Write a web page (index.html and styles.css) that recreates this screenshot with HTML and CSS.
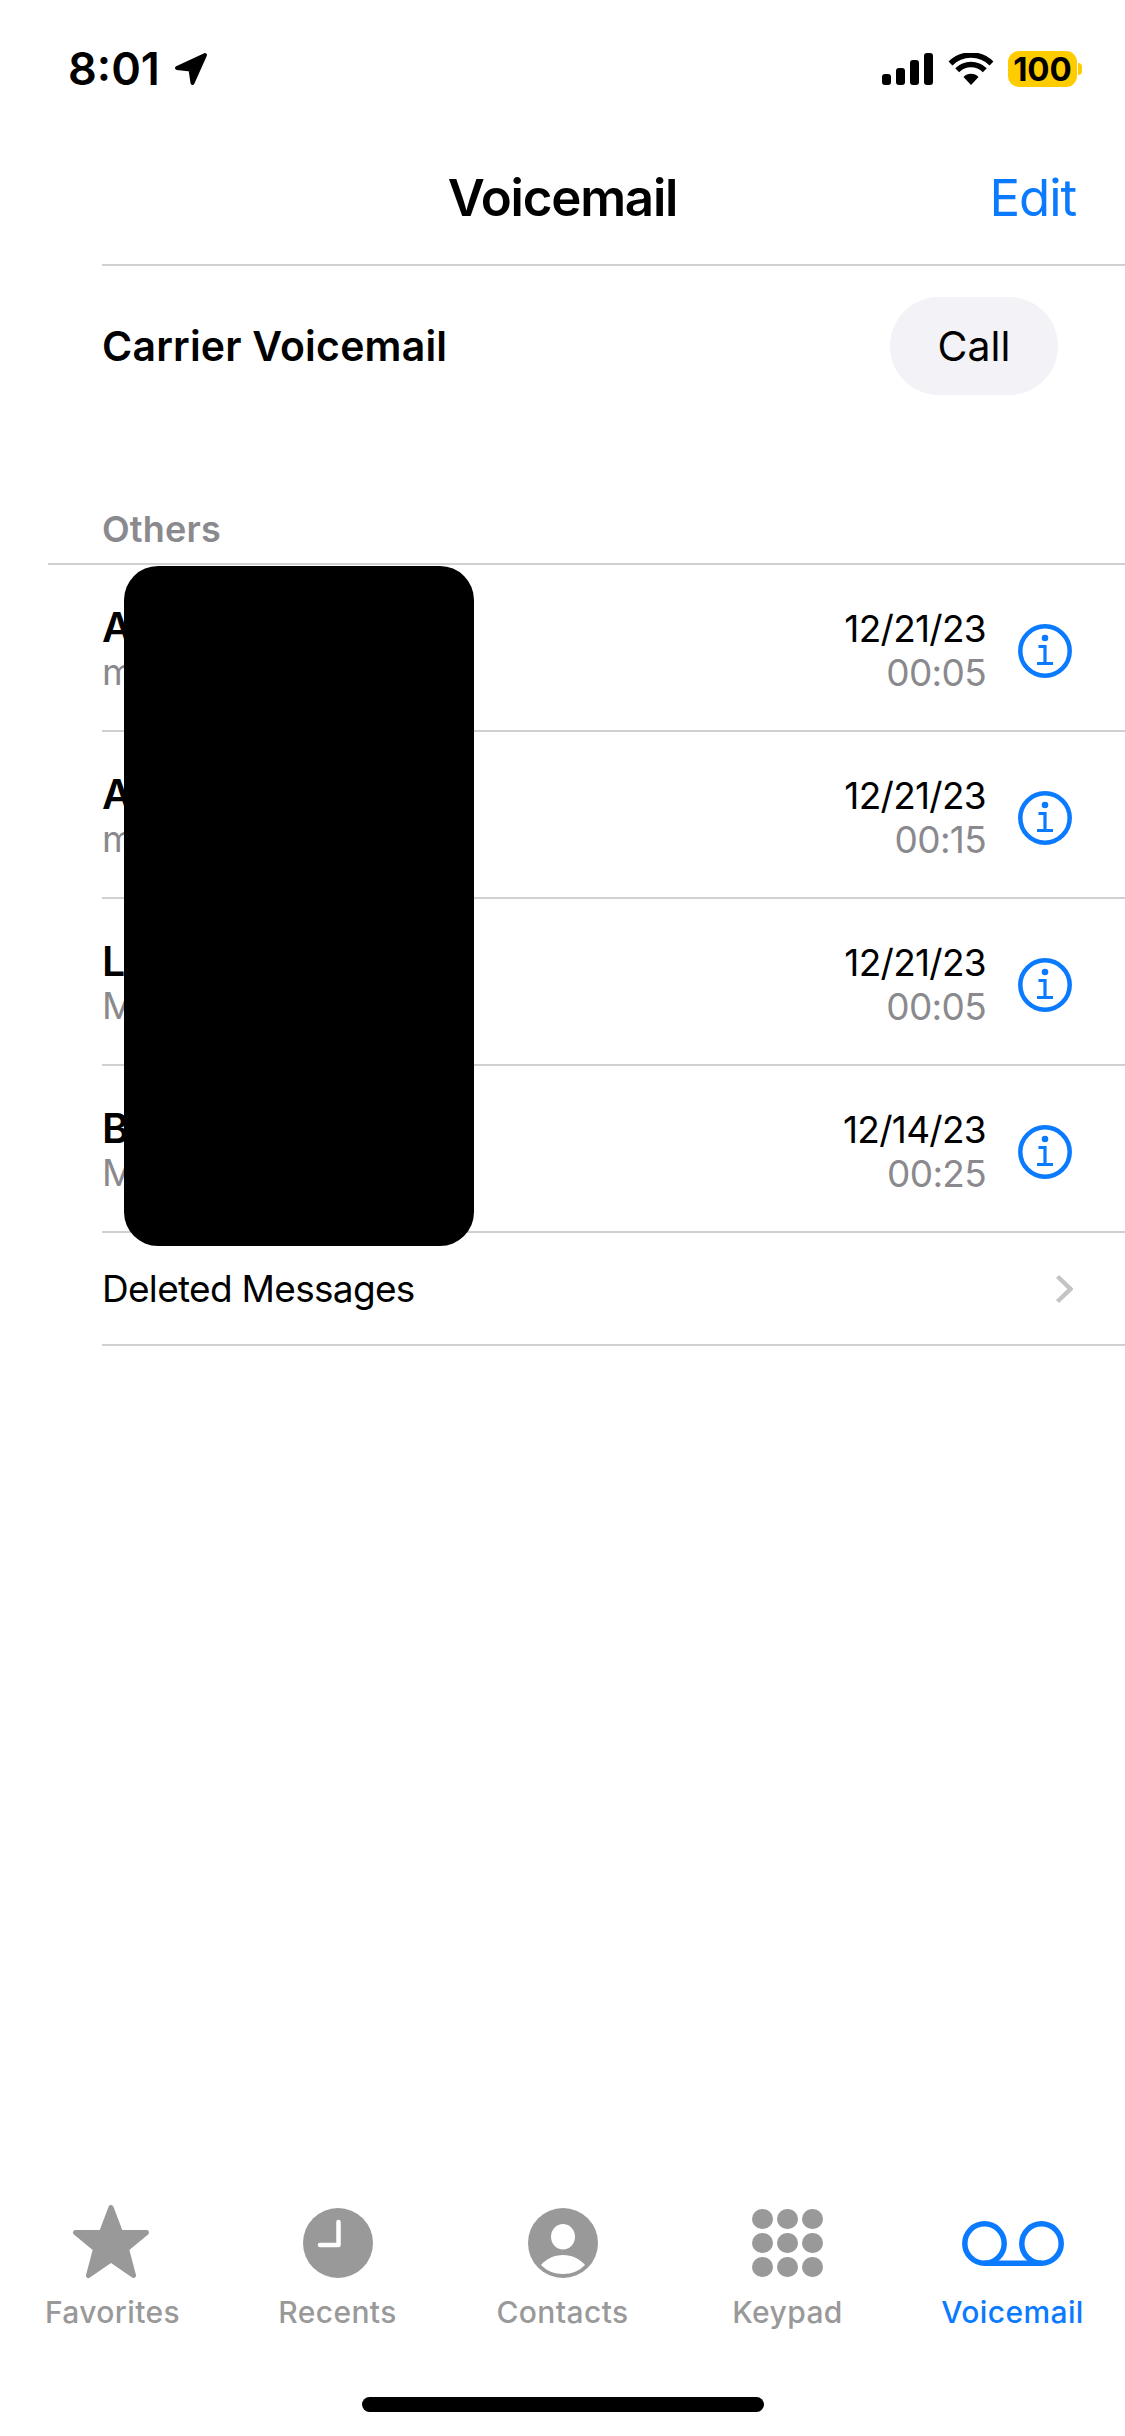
FILE: index.html
```html
<!DOCTYPE html>
<html lang="en">
<head>
    <meta charset="UTF-8">
    <meta name="viewport" content="width=device-width, initial-scale=1.0">
    <title>Voicemail</title>
    <link rel="stylesheet" href="styles.css">
</head>
<body>
<div class="screen">

    <!-- Status bar -->
    <div class="status-bar">
        <div class="status-left">
            <span class="status-time">8:01</span>
            <svg class="icon-location" viewBox="0 0 34 34"><path d="M31 3 L3 16 L16.5 17.5 L18.5 31 Z"/></svg>
        </div>
        <div class="status-right">
            <div class="signal">
                <span class="signal-bar bar-1"></span>
                <span class="signal-bar bar-2"></span>
                <span class="signal-bar bar-3"></span>
                <span class="signal-bar bar-4"></span>
            </div>
            <svg class="icon-wifi" viewBox="0 0 46 33">
                <path class="wifi-arc" d="M2.5 10.5 A29 29 0 0 1 43.5 10.5"/>
                <path class="wifi-arc" d="M9.2 17.2 A19.5 19.5 0 0 1 36.8 17.2"/>
                <path class="wifi-dot" d="M23 32 L15.5 24 A10.5 10.5 0 0 1 30.5 24 Z"/>
            </svg>
            <div class="battery">
                <span class="battery-body">100</span>
                <span class="battery-nub"></span>
            </div>
        </div>
    </div>

    <!-- Navigation -->
    <div class="nav">
        <span></span>
        <span class="nav-title">Voicemail</span>
        <span class="nav-edit">Edit</span>
    </div>

    <!-- Carrier voicemail -->
    <div class="carrier">
        <span class="carrier-name">Carrier Voicemail</span>
        <span class="call-button">Call</span>
    </div>

    <div class="section-title">Others</div>

    <!-- Messages -->
    <div class="list">
        <div class="row">
            <div class="row-main">
                <div class="row-name">A</div>
                <div class="row-sub">m</div>
            </div>
            <div class="row-meta">
                <div class="row-date">12/21/23</div>
                <div class="row-length">00:05</div>
            </div>
            <svg class="icon-info" viewBox="0 0 54 54"><use href="#info"/></svg>
        </div>
        <div class="row">
            <div class="row-main">
                <div class="row-name">A</div>
                <div class="row-sub">m</div>
            </div>
            <div class="row-meta">
                <div class="row-date">12/21/23</div>
                <div class="row-length">00:15</div>
            </div>
            <svg class="icon-info" viewBox="0 0 54 54"><use href="#info"/></svg>
        </div>
        <div class="row">
            <div class="row-main">
                <div class="row-name">L</div>
                <div class="row-sub">M</div>
            </div>
            <div class="row-meta">
                <div class="row-date">12/21/23</div>
                <div class="row-length">00:05</div>
            </div>
            <svg class="icon-info" viewBox="0 0 54 54"><use href="#info"/></svg>
        </div>
        <div class="row">
            <div class="row-main">
                <div class="row-name">B</div>
                <div class="row-sub">M</div>
            </div>
            <div class="row-meta">
                <div class="row-date">12/14/23</div>
                <div class="row-length">00:25</div>
            </div>
            <svg class="icon-info" viewBox="0 0 54 54"><use href="#info"/></svg>
        </div>
        <div class="deleted">
            <span>Deleted Messages</span>
            <svg class="icon-chevron" viewBox="0 0 18 30"><path d="M2.5 2.5 L15.5 15 L2.5 27.5"/></svg>
        </div>
        <div class="redaction"></div>
    </div>

    <!-- Tab bar -->
    <div class="tabbar">
        <div class="tabs">
            <div class="tab">
                <div class="tab-icon">
                    <svg class="icon-star" viewBox="0 0 78 76"><path d="M39 2.500 L48.500 27.500 L74.500 27.500 L54.500 44 L61.500 70.500 L39 55 L16.500 70.500 L23.500 44 L3.500 27.500 L29.500 27.500 Z"/></svg>
                </div>
                <span class="tab-label">Favorites</span>
            </div>
            <div class="tab">
                <div class="tab-icon">
                    <svg class="icon-clock" viewBox="0 0 70 70">
                        <circle class="tab-fill" cx="35" cy="35" r="35"/>
                        <path class="clock-hands" d="M35.500 14 V37 H17"/>
                    </svg>
                </div>
                <span class="tab-label">Recents</span>
            </div>
            <div class="tab">
                <div class="tab-icon">
                    <svg class="icon-contact" viewBox="0 0 70 70">
                        <circle class="tab-fill" cx="35" cy="35" r="35"/>
                        <ellipse class="contact-cut" cx="35" cy="28.800" rx="12" ry="12.800"/>
                        <path class="contact-cut" d="M13 57 C18 51 26 47 35 47 C44 47 52 51 57 57 C51 63 44 66 35 66 C26 66 19 63 13 57 Z"/>
                    </svg>
                </div>
                <span class="tab-label">Contacts</span>
            </div>
            <div class="tab">
                <div class="tab-icon">
                    <div class="keypad">
                        <span></span><span></span><span></span>
                        <span></span><span></span><span></span>
                        <span></span><span></span><span></span>
                    </div>
                </div>
                <span class="tab-label">Keypad</span>
            </div>
            <div class="tab tab-active">
                <div class="tab-icon">
                    <svg class="icon-voicemail" viewBox="0 0 102 45">
                        <circle cx="22.500" cy="22.500" r="19.700"/>
                        <circle cx="79.500" cy="22.500" r="19.700"/>
                        <path d="M22.500 42.200 H79.500"/>
                    </svg>
                </div>
                <span class="tab-label">Voicemail</span>
            </div>
        </div>
        <div class="home-bar"></div>
    </div>

    <svg class="defs" width="0" height="0">
        <symbol id="info" viewBox="0 0 54 54">
            <circle cx="27" cy="27" r="24.700" fill="none" stroke="#0a7aff" stroke-width="4.500"/>
            <circle cx="27" cy="14" r="3.300" fill="#0a7aff"/>
            <path d="M20.500 22.500 H27 V39.500 M19 39.500 H35" fill="none" stroke="#0a7aff" stroke-width="3.200"/>
        </symbol>
    </svg>
</div>
</body>
</html>
```

FILE: styles.css
```css
/* Основа экрана */
* {
    box-sizing: border-box;
}
body {
    margin: 0;
    background: #fff;
    color: #000;
    font-family: Inter, "Liberation Sans", sans-serif;
}
.screen {
    width: 1125px;
    height: 2436px;
    display: flex;
    flex-direction: column;
    overflow: hidden;
}
.defs {
    position: absolute;
}

/* Status bar */
.status-bar {
    height: 138px;
    display: flex;
    justify-content: space-between;
    align-items: center;
    padding: 0 43px 0 68px;
}
.status-left {
    display: flex;
    align-items: center;
    gap: 14px;
}
.status-time {
    font-size: 45px;
    font-weight: 600;
    line-height: 54px;
}
.icon-location {
    width: 34px;
    height: 34px;
}
.icon-location path {
    fill: #000;
    stroke: #000;
    stroke-width: 4;
    stroke-linejoin: round;
}
.status-right {
    display: flex;
    align-items: center;
}
.signal {
    display: flex;
    align-items: flex-end;
    gap: 5px;
    height: 32px;
    margin-right: 15px;
}
.signal-bar {
    width: 9px;
    background: #000;
    border-radius: 3px;
}
.bar-1 { height: 11px; }
.bar-2 { height: 17px; }
.bar-3 { height: 25px; }
.bar-4 { height: 32px; }
.icon-wifi {
    width: 46px;
    height: 33px;
    margin-right: 14px;
}
.wifi-arc {
    fill: none;
    stroke: #000;
    stroke-width: 5.5;
}
.wifi-dot {
    fill: #000;
}
.battery {
    display: flex;
    align-items: center;
}
.battery-body {
    width: 69px;
    height: 36px;
    border-radius: 11px;
    background: #ffcc00;
    font-size: 33px;
    font-weight: 700;
    line-height: 36px;
    text-align: center;
}
.battery-nub {
    width: 4px;
    height: 12px;
    margin-left: 1px;
    background: #ffcc00;
    border-radius: 0 6px 6px 0;
}

/* Navigation */
.nav {
    height: 126px;
    display: grid;
    grid-template-columns: 1fr auto 1fr;
    align-items: center;
    padding: 0 49px 8px;
}
.nav-title {
    font-size: 51px;
    font-weight: 600;
    letter-spacing: -1.2px;
}
.nav-edit {
    font-size: 51px;
    letter-spacing: -1.1px;
    color: #0a7aff;
    text-align: right;
}

/* Carrier */
.carrier {
    margin-left: 102px;
    height: 162px;
    border-top: 2px solid #d0d0d2;
    display: flex;
    justify-content: space-between;
    align-items: center;
    padding-right: 67px;
}
.carrier-name {
    font-size: 41px;
    font-weight: 600;
    letter-spacing: 0.2px;
}
.call-button {
    width: 168px;
    height: 98px;
    border-radius: 49px;
    background: #f2f2f7;
    font-size: 41px;
    line-height: 98px;
    text-align: center;
}
.section-title {
    height: 139px;
    margin-left: 48px;
    padding: 0 0 12px 54px;
    display: flex;
    align-items: flex-end;
    border-bottom: 2px solid #d0d0d2;
    color: #8a8a8e;
    font-size: 36px;
    font-weight: 600;
    letter-spacing: 0.2px;
}

/* Список сообщений */
.list {
    position: relative;
    margin-left: 102px;
}
.row {
    height: 167px;
    display: flex;
    align-items: center;
    padding: 6px 53px 0 0;
    border-bottom: 2px solid #d0d0d2;
}
.row-main {
    flex: 1;
    margin-bottom: 6px;
}
.row-name {
    font-size: 41px;
    font-weight: 600;
    line-height: 48px;
}
.row-sub {
    font-size: 37px;
    line-height: 42px;
    color: #8a8a8e;
}
.row-meta {
    text-align: right;
    margin-right: 32px;
    letter-spacing: -0.7px;
}
.row-date {
    font-size: 37px;
    line-height: 44px;
}
.row-length {
    font-size: 37px;
    line-height: 44px;
    color: #8a8a8e;
}
.icon-info {
    width: 54px;
    height: 54px;
}
.deleted {
    height: 113px;
    display: flex;
    justify-content: space-between;
    align-items: center;
    padding-right: 52px;
    border-bottom: 2px solid #d0d0d2;
    font-size: 37px;
    letter-spacing: -0.7px;
}
.icon-chevron {
    width: 18px;
    height: 30px;
}
.icon-chevron path {
    fill: none;
    stroke: #c4c4c7;
    stroke-width: 4.5;
}
.redaction {
    position: absolute;
    left: 22px;
    top: 1px;
    width: 350px;
    height: 680px;
    background: #000;
    border-radius: 34px;
}

/* Tab bar */
.tabbar {
    margin-top: auto;
    height: 233px;
}
.tabs {
    display: grid;
    grid-template-columns: repeat(5, 1fr);
}
.tab {
    display: flex;
    flex-direction: column;
    align-items: center;
    gap: 9px;
    color: #999;
}
.tab-icon {
    height: 80px;
    display: flex;
    align-items: center;
    justify-content: center;
}
.tab-label {
    font-size: 30px;
    font-weight: 500;
    letter-spacing: 0.4px;
    line-height: 40px;
}
.tab-active {
    color: #0a7aff;
}
.tab-fill {
    fill: #999;
}
.icon-star {
    width: 78px;
    height: 76px;
    margin-right: 3px;
}
.icon-star path {
    fill: #999;
    stroke: #999;
    stroke-width: 5;
    stroke-linejoin: round;
}
.icon-clock, .icon-contact {
    width: 70px;
    height: 70px;
}
.clock-hands {
    fill: none;
    stroke: #fff;
    stroke-width: 4.5;
    stroke-linecap: round;
    stroke-linejoin: round;
}
.contact-cut {
    fill: #fff;
}
.keypad {
    display: grid;
    grid-template-columns: repeat(3, 20.5px);
    gap: 3.5px 4.5px;
}
.keypad span {
    height: 20.5px;
    border-radius: 50%;
    background: #999;
}
.icon-voicemail {
    width: 102px;
    height: 45px;
}
.icon-voicemail circle, .icon-voicemail path {
    fill: none;
    stroke: #0a7aff;
    stroke-width: 5.5;
}
.home-bar {
    width: 402px;
    height: 15px;
    margin: 65px auto 0;
    border-radius: 8px;
    background: #000;
}
```
